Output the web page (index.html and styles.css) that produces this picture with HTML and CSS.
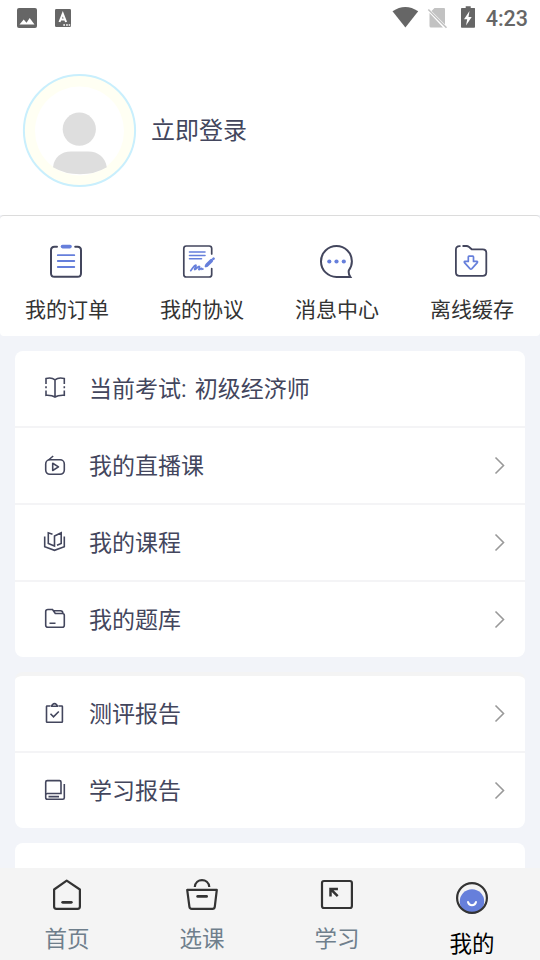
FILE: index.html
```html
<!DOCTYPE html>
<html lang="zh-CN">
<head>
<meta charset="utf-8">
<title>我的</title>
<link rel="stylesheet" href="styles.css">
</head>
<body>
<div class="app">
  <header class="status">
    <svg width="60" height="36" viewBox="15 0 60 36">
      <rect x="17" y="8" width="20" height="20" rx="2" fill="#666"/>
      <path d="M19.500 24.500l4.200-5 2.800 3.200 3.200-4.700 4.800 6.500z" fill="#fff"/>
      <rect x="55" y="9" width="16" height="18" rx="1.300" fill="#666"/>
      <path d="M59.500 22L62.800 13.800L66.100 22M60.500 19.600H65.100" fill="none" stroke="#fff" stroke-width="2"/>
      <path d="M63.300 24.900h1.700M66.100 24.900h1.700M68.700 24.900h1.500" stroke="#fff" stroke-width="1.500"/>
    </svg>
    <div class="status-right">
      <svg width="86" height="36" viewBox="392 0 86 36">
        <path d="M392.500 11.300Q405.300 2.800 418.200 11.300L405.400 27.500z" fill="#666"/>
        <path d="M434.500 8H444q1 0 1 1V24.500L431.500 11z M429.500 13V26q0 1.500 1.500 1.500H443z" fill="#c2c2c2"/>
        <path d="M428.300 9.500L446.500 27.700" stroke="#c2c2c2" stroke-width="1.600"/>
        <path d="M462 8h3.700V6.200h5V8h3.800q.5 0 .5.500V27q0 .8-.8.8H461.800q-.8 0-.8-.8V8.500q0-.5 1-.5z" fill="#666"/>
        <path d="M469.500 11L464 19.300h3.200L466 25.500l5.700-8.500h-3.200z" fill="#fff"/>
      </svg>
      <span class="clock">4:23</span>
    </div>
  </header>

  <section class="profile">
    <svg class="avatar" width="114" height="114" viewBox="22 74 114 114">
      <circle cx="79.500" cy="130.500" r="55.600" fill="#fffff3" stroke="#c9effd" stroke-width="2"/>
      <circle cx="79.500" cy="131" r="44.500" fill="#fff"/>
      <circle cx="79.300" cy="129.200" r="16.600" fill="#dedede"/>
      <path d="M53 170.500C54 159 61 151.500 71 151.500H88.500C98 151.500 105.500 159 106.800 170.500Q95 179 80 179Q65 179 53 170.500z" transform="matrix(1 0 0 0.830 0 25.800)" fill="#dedede"/>
    </svg>
    <span class="login">立即登录</span>
  </section>

  <nav class="actions">
    <a class="action">
      <svg width="37" height="36" viewBox="49 244 37 36" fill="none" stroke-linecap="round">
        <path d="M57 246.800H54.500Q51 246.800 51 250.300V273.200Q51 276.800 54.500 276.800H77.500Q81 276.800 81 273.200V250.300Q81 246.800 77.500 246.800H75.200" stroke="#43465d" stroke-width="2"/>
        <path d="M62.500 246.600H70" stroke="#667fdb" stroke-width="3.600"/>
        <path d="M57.800 255.200H74.300M57.800 261H74.300M57.800 267H74.300" stroke="#667fdb" stroke-width="1.800"/>
      </svg>
      <span>我的订单</span>
    </a>
    <a class="action">
      <svg width="37" height="36" viewBox="184 244 37 36" fill="none" stroke-linecap="round">
        <path d="M211.700 254V248.500Q211.700 246 209.200 246H186.300Q183.800 246 183.800 248.500V274.500Q183.800 277 186.300 277H209.200Q211.700 277 211.700 274.500V268.500" stroke="#43465d" stroke-width="1.700"/>
        <path d="M189.500 252H205M189.500 255.500H205M189.500 258.800H201.500" stroke="#667fdb" stroke-width="1.600"/>
        <path d="M190.700 270.700C193 268 194.500 264.500 196 265.200C197 266 193.500 270 195 269.500C196.500 269 198.500 265.500 199.500 266.500C200 267.500 198 270 199.200 269.600C200.500 269 201.500 267.500 202 269.200L203 269" stroke="#667fdb" stroke-width="1.700"/>
        <path d="M207 265L211.300 260.700" stroke="#667fdb" stroke-width="3.600"/>
        <path d="M213.300 258.900L213.600 258.600M205.900 266.200L206.200 265.900" stroke="#667fdb" stroke-width="2.600"/>
      </svg>
      <span>我的协议</span>
    </a>
    <a class="action">
      <svg width="37" height="36" viewBox="319 244 37 36" fill="none">
        <path d="M336.500 276.900H350.300Q348.200 274 348.800 270.300Q351.900 266.500 351.900 261.300C351.900 252.800 345 246 336.500 246S321 252.800 321 261.400S328 276.900 336.500 276.900z" stroke="#43465d" stroke-width="2"/>
        <g fill="#667fdb"><circle cx="329.300" cy="261.500" r="2.100"/><circle cx="336.500" cy="261.500" r="2.100"/><circle cx="343.800" cy="261.500" r="2.100"/></g>
      </svg>
      <span>消息中心</span>
    </a>
    <a class="action">
      <svg width="37" height="36" viewBox="454 244 37 36" fill="none">
        <path d="M460.500 246.100H459.500Q455.900 246.100 455.900 249.700V272.300Q455.900 275.900 459.500 275.900H482.700Q486.300 275.900 486.300 272.300V252.800Q486.300 249.300 482.700 249.300H471.700L468.800 246.800Q468 246 466.500 246H462.500" stroke="#43465d" stroke-width="1.800"/>
        <path d="M469 256.200h3.800q.7 0 .7.700v4.500h3.300q1.200.2.500 1.200l-5.400 6q-1 1-2 0l-5.400-6q-.7-1 .5-1.200h3.300v-4.500q0-.7.700-.7z" stroke="#667fdb" stroke-width="1.700" stroke-linejoin="round"/>
      </svg>
      <span>离线缓存</span>
    </a>
  </nav>

  <main class="content">
    <section class="card">
      <a class="row">
        <svg class="icon" viewBox="43 376 24 25">
          <path d="M46 384V378.500Q51.500 377 55 379.800Q58.500 377 64.300 378.500V384M46 386.300V388.300M64.300 386.300V388.300M46 390.500V395.300Q52 395 55 397Q58 395 64.300 395.300V390.500M55 380V396.500"/>
        </svg>
        <span class="label">当前考试: 初级经济师</span>
      </a>
      <a class="row">
        <svg class="icon" viewBox="43 453 24 25">
          <rect x="45.700" y="459.800" width="18.600" height="14.500" rx="4.200"/><path d="M48.500 460L53.200 456M52.700 463.300V470.500L58.500 466.900z" stroke-linejoin="round"/>
        </svg>
        <span class="label">我的直播课</span>
        <svg class="chevron" viewBox="0 0 12 21"><path d="M1.500 2.500L9.500 10.500L1.500 18.500"/></svg>
      </a>
      <a class="row">
        <svg class="icon" viewBox="43 530 24 25">
          <path d="M44.700 536.500V546.800L54.500 550.300L64.300 546.800V536.500M52.500 534.200L48.300 532.800V543.500L54.500 546V536L61.200 532.800V543.500L57 545.200"/>
        </svg>
        <span class="label">我的课程</span>
        <svg class="chevron" viewBox="0 0 12 21"><path d="M1.500 2.500L9.500 10.500L1.500 18.500"/></svg>
      </a>
      <a class="row">
        <svg class="icon" viewBox="43 607 24 25">
          <path d="M48 609.500H52.500L55.300 613.500H62.500Q64.300 613.500 64.300 615.300V625.300Q64.300 627.300 62.300 627.300H48Q45.700 627.300 45.700 625.300V611.500Q45.700 609.500 48 609.500M53 610.800H60.500Q62.700 610.800 62.900 613.300M49.500 623.300H55.500"/>
        </svg>
        <span class="label">我的题库</span>
        <svg class="chevron" viewBox="0 0 12 21"><path d="M1.500 2.500L9.500 10.500L1.500 18.500"/></svg>
      </a>
    </section>

    <section class="card card-reports">
      <a class="row">
        <svg class="icon" viewBox="43 701 24 25">
          <path d="M50.500 706H47Q46.500 706 46.500 706.500V721.700Q46.500 722.300 47.100 722.300H61.800Q62.400 722.300 62.400 721.700V706.500Q62.400 706 61.800 706H58.500M51 706.300H58Q56.800 705.800 56.500 704.500Q54.500 702.800 52.500 704.500Q52.200 705.800 51 706.300M50.500 713.800L53.500 716.800L58.800 711.500"/>
        </svg>
        <span class="label">测评报告</span>
        <svg class="chevron" viewBox="0 0 12 21"><path d="M1.500 2.500L9.500 10.500L1.500 18.500"/></svg>
      </a>
      <a class="row">
        <svg class="icon" viewBox="43 778 24 25">
          <path d="M47 793.500H61V782Q61 780.600 59.600 780.600H47.300Q45.700 780.600 45.700 782.200V797.500Q45.700 799.300 47.500 799.300H62.800Q64.300 799.300 64.300 797.800V784M45.700 795Q45.700 793.500 47.500 793.500M48.500 796.600H59"/>
        </svg>
        <span class="label">学习报告</span>
        <svg class="chevron" viewBox="0 0 12 21"><path d="M1.500 2.500L9.500 10.500L1.500 18.500"/></svg>
      </a>
    </section>

    <section class="card card-next"></section>
  </main>

  <footer class="tabs">
    <a class="tab">
      <svg width="37" height="36" viewBox="49 876 37 36">
        <path d="M66.700 880.700L79.900 889.500V906.500Q79.900 908.800 77.600 908.800H56.400Q54.100 908.800 54.100 906.500V889.500z" stroke-width="2.200"/><path d="M62.700 902.300H71.300" stroke-width="2.800"/>
      </svg>
      <span>首页</span>
    </a>
    <a class="tab">
      <svg width="37" height="36" viewBox="184 876 37 36">
        <path d="M187.200 889.900H216.800L214.800 906.600Q214.500 908.800 212.500 908.800H191.700Q189.700 908.800 189.400 906.600z" stroke-width="2.200"/><path d="M194.800 887C195.500 877.700 208.500 877.700 209.300 887" stroke-width="2.200" stroke-linecap="butt"/><path d="M197.700 896.400H206.600" stroke-width="2.800"/>
      </svg>
      <span>选课</span>
    </a>
    <a class="tab">
      <svg width="37" height="36" viewBox="319 876 37 36">
        <rect x="322" y="881" width="29.900" height="27" rx="2" stroke-width="2.200"/><path d="M330.500 895.200V889H336.700M331 889.500L336.800 895.300" stroke-width="2.500" stroke-linecap="square" stroke-linejoin="miter"/>
      </svg>
      <span>学习</span>
    </a>
    <a class="tab active">
      <svg width="37" height="36" viewBox="454 880 37 36">
        <circle cx="472" cy="901.500" r="12.200" fill="#667fdb" stroke="none"/><circle cx="472" cy="898" r="14.900" stroke-width="2.200"/><path d="M468 902C469 906.200 475 906.200 476 902" stroke="#fff" stroke-width="2"/>
      </svg>
      <span>我的</span>
    </a>
  </footer>
</div>
</body>
</html>
```

FILE: styles.css
```css
* { box-sizing: border-box; }
body {
  margin: 0;
  background: #f2f4f9;
  font-family: Roboto, "Noto Sans CJK SC", sans-serif;
}
svg { display: block; flex: none; overflow: visible; }
.app {
  width: 540px;
  height: 960px;
  display: flex;
  flex-direction: column;
  overflow: hidden;
}
.status {
  flex: none;
  height: 36px;
  padding: 0 12px 0 15px;
  display: flex;
  justify-content: space-between;
  background: #fff;
}
.status-right { display: flex; align-items: center; gap: 8px; }
.clock {
  font: 500 21.5px/36px Roboto, sans-serif;
  color: #666;
  padding-top: 2px;
}
.profile {
  flex: none;
  height: 179px;
  padding: 11px 22px 0;
  display: flex;
  align-items: center;
  gap: 15px;
  background: #fff;
}
.login { padding-top: 1px; font-size: 24px; line-height: 37px; color: #43465d; }
.actions {
  flex: none;
  height: 121px;
  padding-top: 28px;
  display: grid;
  grid-template-columns: repeat(4, 1fr);
  background: #fff;
  border-top: 1px solid #dcdcdc;
  border-radius: 4px;
}
.action {
  display: flex;
  flex-direction: column;
  align-items: center;
  gap: 14px;
  font-size: 21px;
  line-height: 32px;
  color: #333;
}
.action span, .tab span { margin-right: 1px; }
.content {
  flex: 1;
  min-height: 0;
  padding: 15px 15px 0;
  overflow: hidden;
}
.card {
  border-radius: 8px;
  overflow: hidden;
  background: #fff;
}
.card-reports { margin: 15px 0; border-top: 4px solid #f4f4f4; }
.card-next { height: 60px; }
.row {
  height: 75px;
  padding: 0 19px 0 28px;
  display: flex;
  align-items: center;
  color: #43465d;
}
.row + .row { height: 77px; border-top: 2px solid #f4f4f6; }
.icon {
  width: 24px;
  height: 25px;
  fill: none;
  stroke: #43465d;
  stroke-width: 1.6;
}
.label {
  flex: 1;
  margin-left: 22px;
  padding-top: 3px;
  font-size: 23px;
  line-height: 34px;
  word-spacing: 2.5px;
}
.chevron {
  width: 12px;
  height: 21px;
  fill: none;
  stroke: #999;
  stroke-width: 1.6;
}
.tabs {
  flex: none;
  height: 92px;
  padding-top: 8px;
  display: grid;
  grid-template-columns: repeat(4, 1fr);
  background: #f4f4f4;
}
.tab {
  display: flex;
  flex-direction: column;
  align-items: center;
  gap: 10px;
  font-size: 22.5px;
  line-height: 34px;
  color: #6f7f8c;
}
.tab svg {
  fill: none;
  stroke: #333;
  stroke-linecap: round;
  stroke-linejoin: round;
}
.tab.active { padding-top: 4px; gap: 11px; color: #000; }
```
